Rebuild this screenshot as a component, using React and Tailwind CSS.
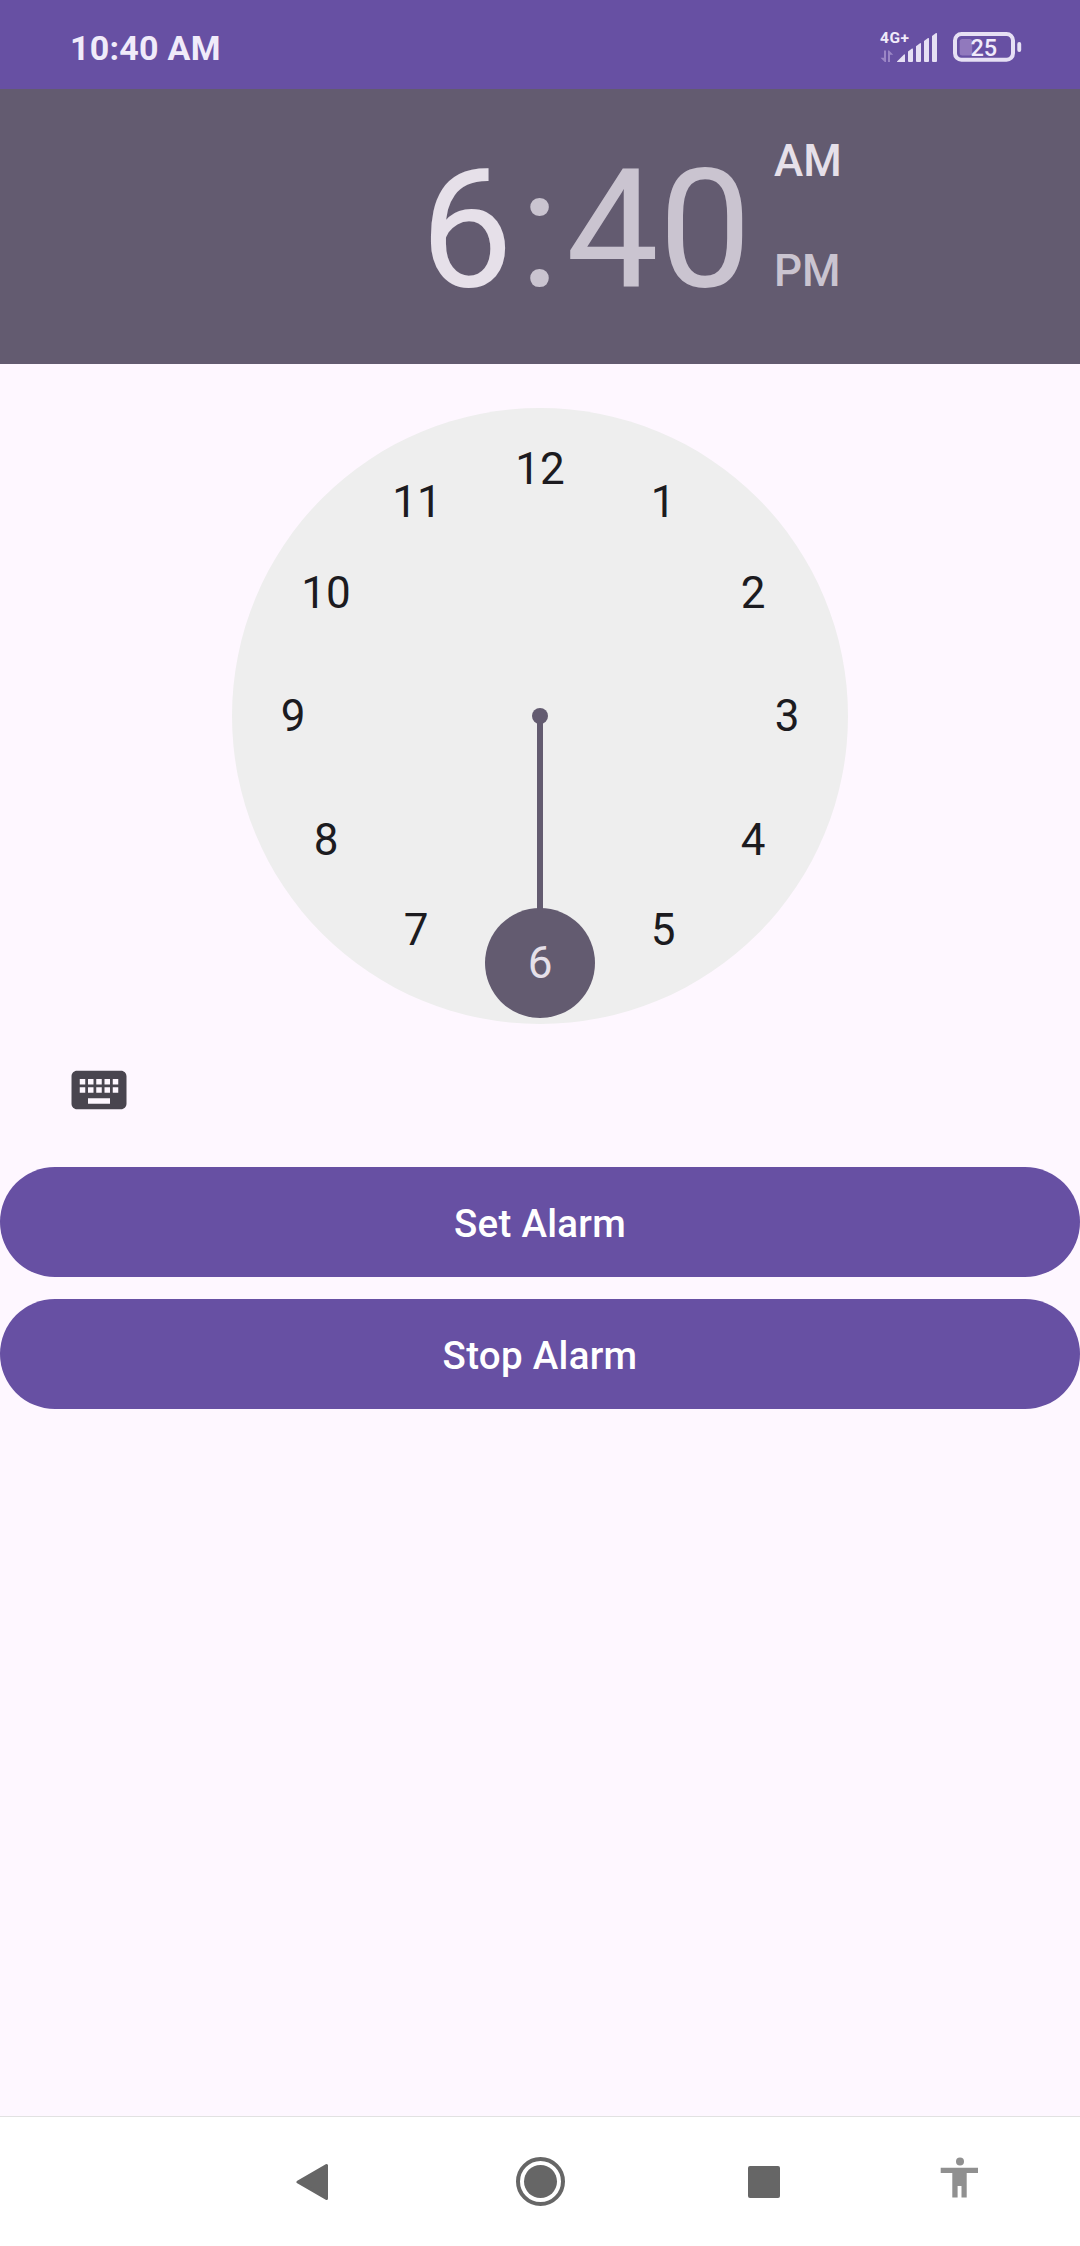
const HOURS = [
  { hour: 12, x: 308, y: 61 },
  { hour: 1, x: 431, y: 94 },
  { hour: 2, x: 521, y: 185 },
  { hour: 3, x: 555, y: 308 },
  { hour: 4, x: 521, y: 432 },
  { hour: 5, x: 431, y: 522 },
  { hour: 6, x: 308, y: 555 },
  { hour: 7, x: 184, y: 522 },
  { hour: 8, x: 94, y: 432 },
  { hour: 9, x: 61, y: 308 },
  { hour: 10, x: 94, y: 185 },
  { hour: 11, x: 185, y: 94 },
];

function Signal() {
  return (
    <svg width="60" height="34" viewBox="879 29 60 34" className="block shrink-0">
      <text x="880" y="42" fontFamily="Roboto, sans-serif" fontWeight="700" fontSize="15.500" textLength="29" fill="#f0ebfa">4G+</text>
      <g fill="#9b86c5">
        <path d="M884 49.500h2V61h-1.200l-4.300-4.200h3.500z" />
        <path d="M888 61h2v-7.200h3.200L889 49.500h-1z" />
      </g>
      <g fill="#e6e0f4">
        <path d="M897 60.500L904 53.500Q905 53 905 54V61H897.500Q896.800 61 897 60.500z" />
        <path d="M908 50.500L912 47.500Q913 47 913 48.500V60Q913 61 912 61H909Q908 61 908 60z" />
        <path d="M916 45.200L920 42.200Q921 41.700 921 43V60Q921 61 920 61H917Q916 61 916 60z" />
        <path d="M924 40L928 37Q929 36.500 929 38V60Q929 61 928 61H925Q924 61 924 60z" />
        <path d="M932 35L936 32Q937 31.500 937 33V60Q937 61 936 61H933Q932 61 932 60z" />
      </g>
    </svg>
  );
}

function Battery() {
  return (
    <svg width="70" height="34" viewBox="952 30 70 34" className="block shrink-0">
      <rect x="955" y="34" width="58" height="25.700" rx="6.500" fill="none" stroke="#e6e0f4" strokeWidth="4" />
      <rect x="959.700" y="39" width="12.500" height="16.500" rx="2.500" fill="#9179bd" />
      <rect x="1017.300" y="42" width="3.900" height="10" rx="1.900" fill="#e6e0f4" />
      <text x="970.500" y="56" fontFamily="Roboto, sans-serif" fontWeight="500" fontSize="23.500" fill="#f0ebfa">25</text>
    </svg>
  );
}

function StatusBar() {
  return (
    <div className="flex h-[89px] items-center bg-[#6750a3] pr-[58px] pl-[70px]">
      <span className="mt-[7px] text-[34px] leading-10 font-bold tracking-[0.25px] text-[#f0ebfa]">10:40 AM</span>
      <div className="mt-[5px] ml-auto flex items-center gap-[13px]">
        <Signal />
        <Battery />
      </div>
    </div>
  );
}

function TimeHeader() {
  return (
    <div className="flex h-[275px] bg-[#635b70] pt-[44px] text-[165px] leading-[194px] text-[#cac4d0]">
      <div className="w-[513px] text-right text-[#e6e0e9]">6</div>
      <div className="w-[53px] text-center">:</div>
      <div className="w-[208px]">40</div>
      <div className="flex flex-col text-[44px] leading-[52px] font-medium">
        <span className="mt-[2px] text-[#e6e0e9]">AM</span>
        <span className="mt-[58px]">PM</span>
      </div>
    </div>
  );
}

function ClockFace() {
  return (
    <div className="relative mx-auto mt-[44px] size-[616px] rounded-full bg-[#eee] text-[44px] leading-[52px] text-[#1c1b1f]">
      <div className="absolute top-[308px] left-[305px] h-[200px] w-[6px] bg-[#635b70]" />
      <div className="absolute top-[300px] left-[300px] size-4 rounded-full bg-[#635b70]" />
      <div className="absolute top-[500px] left-[253px] size-[110px] rounded-full bg-[#635b70]" />
      {HOURS.map(({ hour, x, y }) => (
        <span
          key={hour}
          className={
            "absolute w-[60px] -translate-x-1/2 -translate-y-1/2 text-center " +
            (hour === 6 ? "text-[#e6e0e9]" : "")
          }
          style={{ left: x, top: y }}
        >
          {hour}
        </span>
      ))}
    </div>
  );
}

function KeyboardToggle() {
  return (
    <button className="mt-[33px] ml-[66px] block size-[66px]">
      <svg viewBox="0 0 24 24" className="block size-full" fill="#49454f">
        <path d="M20 5H4c-1.100 0-1.990.9-1.990 2L2 17c0 1.100.9 2 2 2h16c1.100 0 2-.9 2-2V7c0-1.100-.9-2-2-2zm-9 3h2v2h-2V8zm0 3h2v2h-2v-2zM8 8h2v2H8V8zm0 3h2v2H8v-2zm-1 2H5v-2h2v2zm0-3H5V8h2v2zm9 7H8v-2h8v2zm0-4h-2v-2h2v2zm0-3h-2V8h2v2zm3 3h-2v-2h2v2zm0-3h-2V8h2v2z" />
      </svg>
    </button>
  );
}

function AlarmButton({ children }) {
  return (
    <button className="flex h-[110px] w-full items-center justify-center rounded-full bg-[#6750a3] pt-[4px] text-[38.5px] leading-[46px] font-medium tracking-[0.28px] text-white">
      {children}
    </button>
  );
}

function NavBar() {
  return (
    <div className="mt-auto flex h-[130px] items-center border-t border-[#e2e2e2] bg-white pl-[296px]">
      <svg width="33" height="38" viewBox="0 0 33 38" className="block">
        <path d="M2 19L30.500 2.500V35.500z" fill="#666" stroke="#666" strokeWidth="3" strokeLinejoin="round" />
      </svg>
      <div className="ml-[187px] flex size-[49px] items-center justify-center rounded-full border-4 border-[#666]">
        <div className="size-[33px] rounded-full bg-[#666]" />
      </div>
      <div className="ml-[183px] size-8 rounded-[2px] bg-[#666]" />
      <svg width="38" height="42" viewBox="0 0 38 42" className="mb-[7px] ml-[160px] block" fill="#909090">
        <circle cx="20" cy="4.500" r="4" />
        <path d="M.7 10.800H38V16H26.700V40.500H21.500V29H17.600V40.500H12.300V16H.7z" />
      </svg>
    </div>
  );
}

export default function App() {
  return (
    <div className="flex h-[2246px] w-[1080px] flex-col overflow-hidden bg-[#fef7ff] font-[Roboto,sans-serif]">
      <StatusBar />
      <TimeHeader />
      <ClockFace />
      <KeyboardToggle />
      <div className="mt-[44px] flex flex-col gap-[22px]">
        <AlarmButton>Set Alarm</AlarmButton>
        <AlarmButton>Stop Alarm</AlarmButton>
      </div>
      <NavBar />
    </div>
  );
}
